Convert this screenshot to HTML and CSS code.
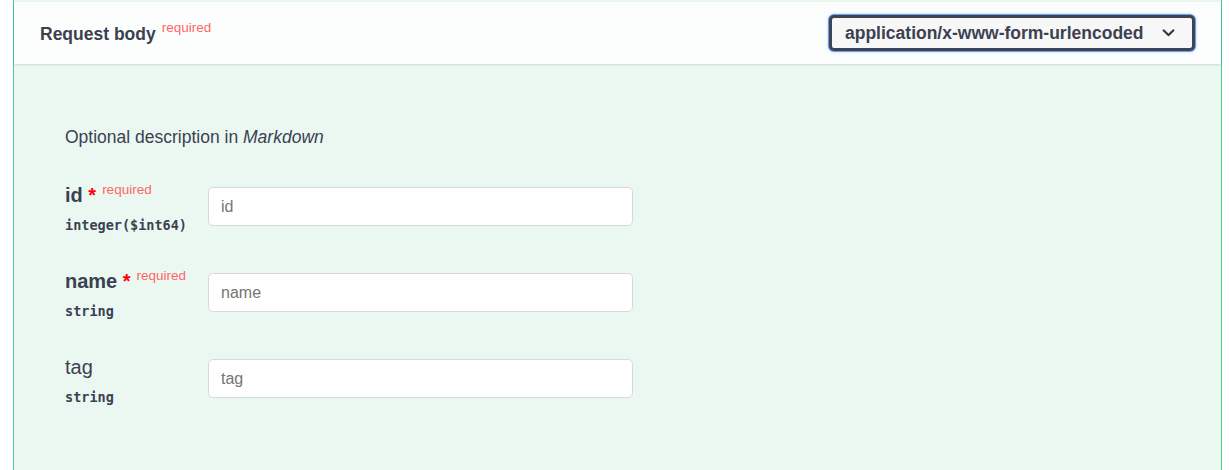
FILE: index.html
```html
<!DOCTYPE html>
<html lang="en">
<head>
<meta charset="utf-8">
<title>Request body</title>
<link rel="stylesheet" href="styles.css">
</head>
<body>
<div class="opblock">
  <div class="section-header">
    <h4 class="title">Request body<span class="req">required</span></h4>
    <div class="select-wrap">
      <select class="content-type">
        <option>application/x-www-form-urlencoded</option>
      </select>
      <svg class="chev" viewBox="0 0 20 20" width="25" height="25" aria-hidden="true"><path d="M13.418 7.859a.695.695 0 01.978 0 .68.68 0 010 .969l-3.908 3.83a.697.697 0 01-.979 0l-3.908-3.83a.68.68 0 010-.969.695.695 0 01.978 0L10 11l3.418-3.141z" fill="#2f3340" stroke="#2f3340" stroke-width="0.3"/></svg>
    </div>
  </div>
  <div class="body">
    <p class="desc">Optional description in <em>Markdown</em></p>
    <div class="params">
      <div class="param">
        <div class="name-col">
          <div class="pname required">id<span class="star">&nbsp;*</span><span class="req">required</span></div>
          <div class="ptype">integer($int64)</div>
        </div>
        <input class="pinput" type="text" placeholder="id">
      </div>
      <div class="param">
        <div class="name-col">
          <div class="pname required">name<span class="star">&nbsp;*</span><span class="req">required</span></div>
          <div class="ptype">string</div>
        </div>
        <input class="pinput" type="text" placeholder="name">
      </div>
      <div class="param">
        <div class="name-col">
          <div class="pname">tag</div>
          <div class="ptype">string</div>
        </div>
        <input class="pinput" type="text" placeholder="tag">
      </div>
    </div>
  </div>
</div>
</body>
</html>
```

FILE: styles.css
```css
html, body {
  margin: 0;
  padding: 0;
  background: #ffffff;
}

body {
  font-family: "Liberation Sans", Arial, sans-serif;
  color: #3b4151;
  height: 470px;
  overflow: hidden;
}

.opblock {
  margin: 0 7px 0 13px;
  border-left: 1px solid #49cc90;
  border-right: 1px solid #49cc90;
  background: #ebf8f2;
  padding-top: 2px;
  min-height: 468px;
}

.section-header {
  display: flex;
  align-items: center;
  justify-content: space-between;
  height: 62px;
  box-sizing: border-box;
  padding: 0 26px;
  background: #fcfefd;
  box-shadow: 0 1px 2px rgba(0, 0, 0, 0.12);
}

.title {
  margin: 0;
  font-size: 17.5px;
  font-weight: 700;
  line-height: 20px;
}

.req {
  color: #ff6666;
  font-size: 13.5px;
  font-weight: 400;
  line-height: 10px;
  vertical-align: 8px;
  padding-left: 6px;
}

.select-wrap {
  position: relative;
  display: flex;
}

.content-type {
  appearance: none;
  -webkit-appearance: none;
  width: 366px;
  height: 36px;
  box-sizing: border-box;
  margin: 0;
  padding: 0 40px 0 13px;
  border: 3px solid #41444e;
  border-radius: 5px;
  background: #f7f7f7;
  color: #3b4151;
  font-family: "Liberation Sans", Arial, sans-serif;
  font-size: 17.5px;
  font-weight: 700;
  box-shadow: 0 0 0 1px rgba(66, 133, 244, 0.75), 0 0 3px 1px rgba(66, 133, 244, 0.35);
  outline: none;
}

.chev {
  position: absolute;
  right: 14px;
  top: 5px;
  pointer-events: none;
}

.body {
  padding: 63px 0 0 51px;
}

.desc {
  margin: 0;
  font-size: 17.5px;
  line-height: 20px;
}

.desc em {
  font-style: italic;
}

.params {
  display: flex;
  flex-direction: column;
  gap: 36px;
  margin-top: 37px;
}

.param {
  display: grid;
  grid-template-columns: 143px 425px;
  align-items: start;
}

.pname {
  font-size: 20px;
  line-height: 23px;
  font-weight: 400;
  white-space: nowrap;
}

.pname.required {
  font-weight: 700;
}

.star {
  color: #ff0000;
}

.ptype {
  margin-top: 9px;
  font-family: "DejaVu Sans Mono", "Liberation Mono", monospace;
  font-size: 13.5px;
  line-height: 18px;
  font-weight: 700;
}

.pinput {
  margin-top: 3px;
  width: 425px;
  height: 39px;
  box-sizing: border-box;
  padding: 0 12px;
  border: 1px solid #d9d9d9;
  border-radius: 5px;
  background: #ffffff;
  font-family: "Liberation Sans", Arial, sans-serif;
  font-size: 16px;
  color: #3b4151;
  outline: none;
}

.pinput::placeholder {
  color: #757575;
}
```
